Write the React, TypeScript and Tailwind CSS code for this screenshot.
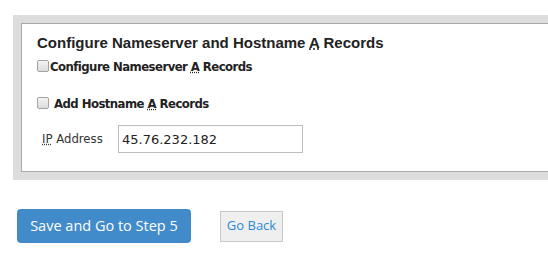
import React from "react"

function Box() {
  return (
    <span className="inline-block h-[12px] w-[12px] shrink-0 rounded-[2px] border border-[#a3a3a3] bg-gradient-to-b from-[#f4f4f4] to-[#dcdcdc]" />
  )
}

export default function App() {
  const tahoma = "font-['DejaVu_Sans_Condensed','DejaVu_Sans',sans-serif]"
  return (
    <div className="h-[257px] w-[548px] overflow-hidden bg-white text-[#333]">
      <div className="ml-[13px] mt-[15px] w-[580px] bg-[#dddddd] p-[8px]">
        <div className="h-[149px] border border-[#a8a8a8] bg-white pl-[15px] pt-[9px]">
          <h2 className="h-[20px] font-['Liberation_Sans',Arial,sans-serif] text-[15px] font-bold leading-[20px] text-[#222]">
            Configure Nameserver and Hostname <abbr title="Address">A</abbr> Records
          </h2>

          <div className={`mt-[7px] flex h-[12px] items-center ${tahoma}`}>
            <Box />
            <span className="ml-[1px] pt-[2px] text-[13px] font-bold leading-[12px] tracking-[-0.55px] text-[#222]">
              Configure Nameserver <abbr title="Address">A</abbr> Records
            </span>
          </div>

          <div className={`mt-[25px] flex h-[12px] items-center ${tahoma}`}>
            <Box />
            <span className="ml-[5px] pt-[2px] text-[13px] font-bold leading-[12px] tracking-[-0.55px] text-[#222]">
              Add Hostname <abbr title="Address">A</abbr> Records
            </span>
          </div>

          <div className={`mt-[16px] flex items-center ${tahoma}`}>
            <label className="w-[81px] pl-[5px] text-[13px] text-[#333]">
              <abbr title="Internet Protocol">IP</abbr> Address
            </label>
            <input
              type="text"
              defaultValue="45.76.232.182"
              className="h-[28px] w-[185px] border border-[#bdbdbd] pl-[3px] font-['DejaVu_Sans',sans-serif] text-[13px] text-[#222] outline-none"
            />
          </div>
        </div>
      </div>

      <div className="ml-[17px] mt-[29px] flex items-center gap-[29px] font-['Open_Sans',sans-serif]">
        <button className="h-[34px] w-[174px] rounded-[4px] bg-[#428bca] text-[14.5px] text-white">
          Save and Go to Step 5
        </button>
        <button className="h-[31px] w-[63px] border border-[#c8c8c8] bg-[#efefef] text-[13px] text-[#2a8ad4]">
          Go Back
        </button>
      </div>
    </div>
  )
}
